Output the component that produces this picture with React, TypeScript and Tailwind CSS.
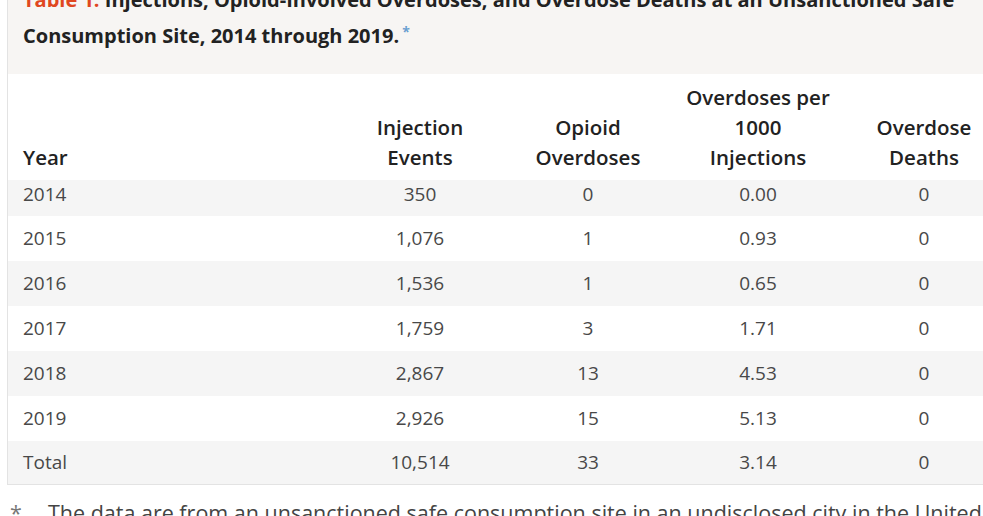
import React from "react";

const rows: [string, string, string, string, string][] = [
  ["2014", "350", "0", "0.00", "0"],
  ["2015", "1,076", "1", "0.93", "0"],
  ["2016", "1,536", "1", "0.65", "0"],
  ["2017", "1,759", "3", "1.71", "0"],
  ["2018", "2,867", "13", "4.53", "0"],
  ["2019", "2,926", "15", "5.13", "0"],
  ["Total", "10,514", "33", "3.14", "0"],
];

const cols = "grid grid-cols-[332px_160px_176px_164px_168px]";

export default function App() {
  return (
    <div className="w-[983px] h-[516px] overflow-hidden bg-white font-['Open_Sans',sans-serif]">
      <div className="ml-[7px] w-[1010px] border-l border-b border-[#e3e3e3]">
        <div className="h-[74px] overflow-hidden bg-[#f7f5f3] px-[15px] text-[20px] leading-[36px] font-bold text-[#222] whitespace-nowrap">
          <div className="-mt-[18px] h-[36px]">
            <span className="text-[#e0471f]">Table 1.</span> Injections, Opioid-Involved Overdoses, and Overdose Deaths at an Unsanctioned Safe
          </div>
          <div className="h-[36px]">
            Consumption Site, 2014 through 2019.
            <span className="relative -top-[6px] ml-[3px] text-[14px] leading-none text-[#6a9fd0]">*</span>
          </div>
        </div>
        <div className={`${cols} h-[106px] items-end pb-[8px] text-[20.5px] leading-[30px] font-semibold text-[#222]`}>
          <div className="pl-[15px]">Year</div>
          <div className="text-center">Injection<br />Events</div>
          <div className="text-center">Opioid<br />Overdoses</div>
          <div className="text-center">Overdoses per<br />1000<br />Injections</div>
          <div className="text-center">Overdose<br />Deaths</div>
        </div>
        {rows.map((r, i) => (
          <div
            key={r[0]}
            className={`${cols} items-center text-[19px] text-[#484848] ${i === 0 ? "h-[36px] pb-[10px]" : i === rows.length - 1 ? "h-[43px]" : "h-[45px]"} ${i % 2 === 0 ? "bg-[#f5f5f5]" : "bg-white"}`}
          >
            <div className="pl-[15px]">{r[0]}</div>
            <div className="text-center">{r[1]}</div>
            <div className="text-center">{r[2]}</div>
            <div className="text-center">{r[3]}</div>
            <div className="text-center">{r[4]}</div>
          </div>
        ))}
      </div>
      <div className="mt-[14px] flex text-[21.5px] leading-[28px] text-[#444] whitespace-nowrap">
        <span className="w-[48px] shrink-0 pl-[10px] text-[#777]">*</span>
        <span>The data are from an unsanctioned safe consumption site in an undisclosed city in the United States.</span>
      </div>
    </div>
  );
}
